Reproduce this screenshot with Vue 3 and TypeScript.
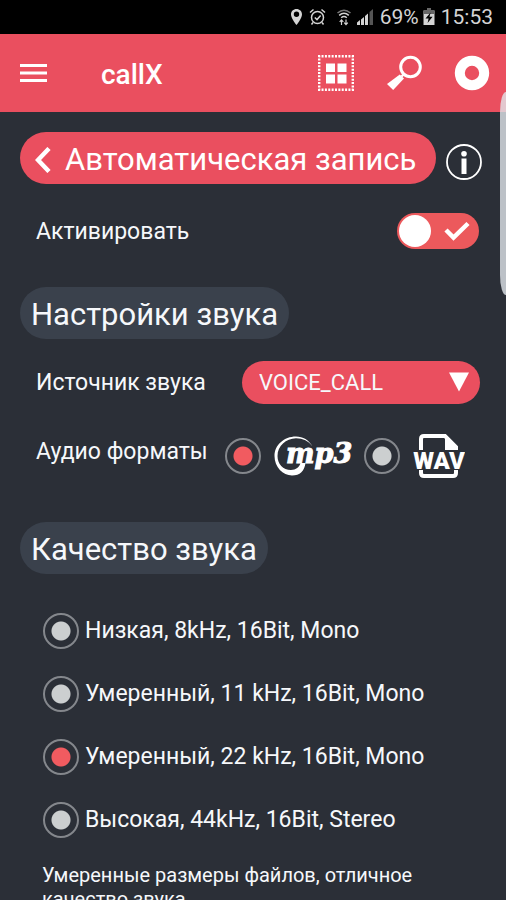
<script setup lang="ts">
import { ref } from 'vue'

interface Quality {
  id: string
  label: string
}

const qualities: Quality[] = [
  { id: 'low', label: 'Низкая, 8kHz, 16Bit, Mono' },
  { id: 'medium-11', label: 'Умеренный, 11 kHz, 16Bit, Mono' },
  { id: 'medium-22', label: 'Умеренный, 22 kHz, 16Bit, Mono' },
  { id: 'high', label: 'Высокая, 44kHz, 16Bit, Stereo' },
]

const active = ref<boolean>(true)
const source = ref<string>('VOICE_CALL')
const format = ref<string>('mp3')
const quality = ref<string>('medium-22')
</script>

<template>
  <div class="screen">
    <div class="status">
      <svg class="status-pin" viewBox="0 0 13 18" width="13" height="18">
        <path d="M6.500 1C3.300 1 1 3.400 1 6.400C1 10.200 6.500 17 6.500 17S12 10.200 12 6.400C12 3.400 9.700 1 6.500 1ZM6.500 3.600A2.700 2.700 0 1 1 6.500 9A2.700 2.700 0 0 1 6.500 3.600Z" fill="#d4d4d4" fill-rule="evenodd" />
      </svg>
      <svg viewBox="0 0 17 18" width="17" height="18" fill="none" stroke="#d4d4d4" stroke-width="1.500">
        <circle cx="8.500" cy="9.500" r="6" />
        <path d="M1 4.500L4.500 1.500M16 4.500L12.500 1.500M4 14.500L2.500 16.500M13 14.500L14.500 16.500M5.800 9.500L8 11.600L11.600 7.600" />
      </svg>
      <svg class="status-wifi" viewBox="0 0 16 18" width="16" height="18" fill="none" stroke="#d4d4d4" stroke-width="1.500">
        <path d="M1.500 5Q8 -0.500 14.500 5" stroke="#777" />
        <path d="M3.200 7.400Q8 3.200 12.800 7.400M5.200 9.800Q8 7.300 10.800 9.800" />
        <path d="M5.500 17V12M3.700 13.800L5.500 11.800L7.300 13.800M10 11.500V16.500M8.200 14.700L10 16.600L11.800 14.700" stroke-width="1.200" />
      </svg>
      <svg class="status-signal" viewBox="0 0 18 18" width="18" height="18">
        <path d="M1 17V14.500L4 12V17ZM5 17V11.500L8 9V17ZM9 17V8L12 5.500V17Z" fill="#d4d4d4" />
        <path d="M13.500 17V4L17 1V17Z" fill="#555" />
      </svg>
      <span class="status-text">69%</span>
      <svg class="status-battery" viewBox="0 0 12 18" width="12" height="18">
        <path d="M4 0.500H8V2.500H11.500V17H0.500V2.500H4Z" fill="#d4d4d4" />
        <path d="M4 0.500H8V2.500H11.500V6H0.500V2.500H4Z" fill="#666" />
        <path d="M7.600 4.500L2.500 10.500H5.600L4.600 15L9.600 8.800H6.500Z" fill="#000" />
      </svg>
      <span class="status-text">15:53</span>
    </div>

    <header class="bar">
      <button class="icon-button" type="button" aria-label="Меню">
        <svg viewBox="0 0 27 18" width="27" height="18" fill="#fff">
          <rect width="27" height="3" />
          <rect y="7.500" width="27" height="3" />
          <rect y="15" width="27" height="3" />
        </svg>
      </button>
      <h1 class="title">callX</h1>
      <nav class="actions">
        <button class="icon-button" type="button" aria-label="Сетка">
          <svg viewBox="0 0 36 36" width="36" height="36">
            <rect x="1.200" y="1.200" width="33.600" height="33.600" fill="none" stroke="#fff" stroke-width="2.400" stroke-dasharray="2 1.360" stroke-dashoffset="1" />
            <path d="M8 8.500H17V17H8ZM19.500 8.500H28.500V17H19.500ZM8 19.500H17V28.500H8ZM19.500 19.500H28.500V28.500H19.500Z" fill="#fff" />
          </svg>
        </button>
        <button class="icon-button" type="button" aria-label="Поиск">
          <svg viewBox="0 0 36 36" width="36" height="36">
            <circle cx="24.500" cy="12" r="9.800" fill="none" stroke="#fff" stroke-width="3" />
            <path d="M13.800 19.500L18 23.500L7.200 35L1 29Z" fill="#fff" />
            <path d="M15.500 21.500L18.500 18.500" stroke="#fff" stroke-width="2.400" />
          </svg>
        </button>
        <button class="icon-button" type="button" aria-label="Запись">
          <svg viewBox="0 0 36 36" width="36" height="36">
            <circle cx="18" cy="18" r="12.200" fill="none" stroke="#fff" stroke-width="10" />
          </svg>
        </button>
      </nav>
    </header>

    <main class="content">
      <div class="page-head">
        <button class="back" type="button">
          <svg viewBox="0 0 16 26" width="16" height="26" fill="none" stroke="#fff" stroke-width="4.500">
            <path d="M14 1.500L3 13L14 24.500" />
          </svg>
          <span>Автоматическая запись</span>
        </button>
        <button class="icon-button info" type="button" aria-label="Информация">
          <svg viewBox="0 0 36 36" width="36" height="36">
            <circle cx="18" cy="18" r="17" fill="none" stroke="#fff" stroke-width="1.800" />
            <circle cx="18" cy="9.800" r="2.800" fill="#fff" />
            <rect x="15.500" y="14.500" width="5" height="15.500" fill="#fff" />
          </svg>
        </button>
      </div>

      <div class="row activate">
        <label class="label" for="active">Активировать</label>
        <span class="switch">
          <input id="active" v-model="active" type="checkbox" />
          <svg v-if="active" class="check" viewBox="0 0 26 20" width="26" height="20" fill="none" stroke="#fff" stroke-width="4.500">
            <path d="M2 9L9.500 16.500L24 2.500" />
          </svg>
        </span>
      </div>

      <h2 class="section">Настройки звука</h2>

      <div class="row source">
        <label class="label" for="source">Источник звука</label>
        <span class="picker">
          <select id="source" v-model="source">
            <option>VOICE_CALL</option>
            <option>MIC</option>
          </select>
          <svg class="arrow" viewBox="0 0 20 20" width="20" height="20">
            <path d="M0 0.500H20L10 19.500Z" fill="#fff" />
          </svg>
        </span>
      </div>

      <div class="row formats" role="radiogroup" aria-labelledby="formats-label">
        <span id="formats-label" class="label formats-label">Аудио форматы</span>
        <div class="format-options">
          <label class="format">
            <input v-model="format" class="radio" type="radio" name="format" value="mp3" />
            <svg viewBox="0 0 78 42" width="78" height="42">
              <path d="M38.500 11.500C35 5 29 1.500 22 1.500C10 1.500 0.500 10 0.500 21C0.500 32 9 40.500 18 40.500C26 40.500 30.500 36 31.500 28H26.500C25.500 32 22 35 17 35C9 35 3.500 29 3.500 21C3.500 11 12 3.500 22 3.300C29 3.300 34.500 6 38.500 11.500Z" fill="#fff" />
              <text class="mp3-text" x="12" y="28">mp3</text>
            </svg>
          </label>
          <label class="format">
            <input v-model="format" class="radio" type="radio" name="format" value="wav" />
            <svg viewBox="0 0 52 44" width="52" height="44">
              <path d="M8 16V5Q8 2 11 2H32L43 13V16M8 36V39Q8 42 11 42H40Q43 42 43 39V36" fill="none" stroke="#fff" stroke-width="4" />
              <path d="M32 1L45 14V16H32Z" fill="#fff" />
              <text class="wav-text" x="26" y="35" text-anchor="middle">WAV</text>
            </svg>
          </label>
        </div>
      </div>

      <h2 id="quality-title" class="section">Качество звука</h2>

      <div class="qualities" role="radiogroup" aria-labelledby="quality-title">
        <label v-for="item in qualities" :key="item.id" class="quality">
          <input v-model="quality" class="radio" type="radio" name="quality" :value="item.id" />
          <span>{{ item.label }}</span>
        </label>
      </div>

      <p class="note">Умеренные размеры файлов, отличное качество звука</p>
    </main>

    <div class="edge-handle"></div>
  </div>
</template>

<style>
body {
  margin: 0;
  background: #2b2f37;
}
</style>

<style scoped>
.screen {
  position: relative;
  display: flex;
  flex-direction: column;
  height: 100vh;
  overflow: hidden;
  background: #2b2f37;
  color: #f6f8fb;
  font-family: Roboto, "Noto Sans", sans-serif;
  font-size: 23px;
}

.screen * {
  box-sizing: border-box;
}

svg {
  display: block;
  flex: none;
}

button,
select {
  border: 0;
  color: inherit;
  font: inherit;
}

.status {
  display: flex;
  flex: none;
  align-items: center;
  justify-content: flex-end;
  height: 34px;
  padding: 0 13px;
  background: #000;
  color: #d4d4d4;
}

.status-pin {
  margin-right: 6px;
}

.status-wifi {
  margin-left: 10px;
}

.status-signal {
  margin: 0 6px 0 4px;
}

.status-battery {
  margin: 0 6px 0 4px;
}

.status-text {
  font-size: 21px;
  line-height: 36px;
}

.bar {
  display: flex;
  flex: none;
  align-items: center;
  height: 78px;
  padding: 0 16px 0 20px;
  background: #ea4f5f;
  color: #fff;
}

.icon-button {
  flex: none;
  padding: 0;
  background: none;
}

.title {
  margin: 0 0 0 54px;
  padding-top: 3px;
  font-size: 28px;
  font-weight: 500;
  line-height: 34px;
}

.actions {
  display: flex;
  gap: 32px;
  margin-left: auto;
}

.content {
  flex: 1;
  min-height: 0;
  padding: 20px 24px 0 20px;
  overflow: hidden;
}

.page-head {
  display: flex;
  align-items: flex-end;
  gap: 10px;
}

.back {
  display: flex;
  flex: 1;
  align-items: center;
  gap: 14px;
  height: 52px;
  padding: 3px 15px 0;
  border-radius: 26px;
  background: #ea4f5f;
  color: #fff;
  font-size: 31px;
  white-space: nowrap;
}

.info {
  margin-bottom: 4px;
}

.row {
  display: flex;
  align-items: center;
  justify-content: space-between;
  padding-left: 16px;
}

.label {
  white-space: nowrap;
}

.activate {
  margin: 29px 3px 38px 0;
}

.switch {
  position: relative;
  height: 36px;
}

.switch input {
  display: block;
  width: 82px;
  height: 36px;
  margin: 0;
  border-radius: 18px;
  background: #6a6f78;
  appearance: none;
}

.switch input::before {
  display: block;
  width: 32px;
  height: 32px;
  margin: 2px;
  border-radius: 50%;
  background: #fff;
  content: "";
}

.switch input:checked {
  background: #ec595c;
}

.check {
  position: absolute;
  top: 8px;
  right: 9px;
  pointer-events: none;
}

.section {
  width: fit-content;
  margin: 0;
  padding: 3px 11px 0;
  border-radius: 26px;
  background: #3a414c;
  font-size: 31px;
  font-weight: 400;
  line-height: 49px;
}

.source {
  margin: 22px 2px 30px 0;
}

.picker {
  position: relative;
  width: 238px;
}

.picker select {
  display: block;
  width: 100%;
  height: 43px;
  padding: 0 40px 0 17px;
  border-radius: 22px;
  background: #ea4f5f;
  font-size: 22px;
  appearance: none;
}

.arrow {
  position: absolute;
  top: 11px;
  right: 11px;
  pointer-events: none;
}

.formats {
  align-items: flex-start;
  margin: 0 17px 45px 0;
}

.formats-label {
  line-height: 36px;
}

.format-options,
.format {
  display: flex;
  align-items: center;
}

.format-options {
  gap: 12px;
}

.format {
  gap: 13px;
  height: 43px;
}

.mp3-text {
  fill: #fff;
  stroke: #fff;
  stroke-width: 1px;
  font-family: "DejaVu Serif", serif;
  font-size: 27px;
  font-style: italic;
  font-weight: 700;
}

.wav-text {
  fill: #fff;
  font-family: Roboto, sans-serif;
  font-size: 24px;
  font-weight: 900;
}

.radio {
  flex: none;
  width: 36px;
  height: 36px;
  margin: 0;
  border: 2px solid #84878c;
  border-radius: 50%;
  background: radial-gradient(circle, #cccfd0 9px, transparent 10px);
  appearance: none;
}

.radio:checked {
  background: radial-gradient(circle, #f15b60 9px, transparent 10px);
}

.qualities {
  margin-top: 25px;
  padding-left: 23px;
}

.quality {
  display: flex;
  align-items: center;
  gap: 6px;
  height: 63px;
}

.note {
  margin: 12px 0 0;
  padding: 0 22px;
  font-size: 20px;
  line-height: 24px;
}

.edge-handle {
  position: absolute;
  top: 92px;
  right: 0;
  width: 6px;
  height: 203px;
  border-radius: 6px 0 0 6px / 20px 0 0 20px;
  background: rgba(225, 230, 235, 0.8);
}
</style>
